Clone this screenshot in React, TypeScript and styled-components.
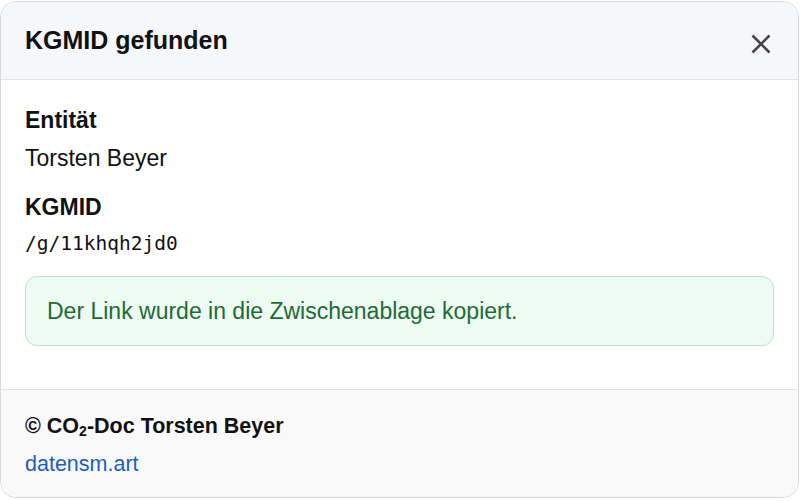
import React from "react";
import styled, { createGlobalStyle } from "styled-components";

const Global = createGlobalStyle`
  html, body { margin: 0; padding: 0; background: #ffffff; }
  body { font-family: "Liberation Sans", Arial, sans-serif; color: #111; }
  * { box-sizing: border-box; }
`;

const Page = styled.div`
  padding: 1px 1px 3px 0;
  height: 501px;
`;

const Dialog = styled.div`
  height: 497px;
  border: 1px solid #d6d9de;
  border-radius: 16px;
  overflow: hidden;
  display: flex;
  flex-direction: column;
  background: #fff;
`;

const Header = styled.div`
  height: 78px;
  flex: none;
  background: #f6f7f9;
  border-bottom: 1px solid #dfe2e6;
  display: flex;
  align-items: center;
  justify-content: space-between;
  padding: 0 25px 0 24px;
`;

const Title = styled.h2`
  margin: 0;
  font-size: 25px;
  font-weight: 700;
  color: #111;
`;

const CloseButton = styled.button`
  border: none;
  background: transparent;
  padding: 0;
  width: 24px;
  height: 24px;
  display: flex;
  align-items: center;
  justify-content: center;
  cursor: pointer;
  margin-top: 6px;
`;

const Body = styled.div`
  flex: 1;
  padding: 26px 24px 0 24px;
  display: flex;
  flex-direction: column;
`;

const Label = styled.div`
  font-size: 23px;
  font-weight: 700;
  color: #111;
  line-height: 28px;
`;

const Value = styled.div<{ $mono?: boolean }>`
  font-size: ${(p) => (p.$mono ? "19.5px" : "23px")};
  font-family: ${(p) => (p.$mono ? '"DejaVu Sans Mono", "Liberation Mono", monospace' : "inherit")};
  color: #111;
  line-height: ${(p) => (p.$mono ? "24px" : "28px")};
  margin-top: ${(p) => (p.$mono ? "11px" : "10px")};
  margin-bottom: ${(p) => (p.$mono ? "20px" : "21px")};
`;

const Alert = styled.div`
  height: 70px;
  border: 1px solid #b9e4c9;
  background: #edfbf2;
  border-radius: 12px;
  display: flex;
  align-items: center;
  padding: 0 21px;
  color: #1e6b36;
  font-size: 23px;
`;

const Footer = styled.div`
  flex: none;
  height: 108px;
  background: #f9f9fa;
  border-top: 1px solid #e2e4e7;
  padding: 23px 24px 0 24px;
  display: flex;
  flex-direction: column;
  gap: 12px;
`;

const Copyright = styled.div`
  font-size: 21.5px;
  font-weight: 700;
  line-height: 26px;
  color: #111;
`;

const Sub = styled.span`
  font-size: 14px;
  line-height: 0;
  vertical-align: -3px;
`;

const Link = styled.a`
  font-size: 21.5px;
  line-height: 26px;
  color: #1a5fc4;
  text-decoration: none;
  align-self: flex-start;
`;

export default function App() {
  return (
    <>
      <Global />
      <Page>
        <Dialog>
          <Header>
            <Title>KGMID gefunden</Title>
            <CloseButton aria-label="Schließen">
              <svg width="20" height="20" viewBox="0 0 20 20">
                <path d="M1.5 1.5 L18.5 18.5 M18.5 1.5 L1.5 18.5" stroke="#444" strokeWidth="2.5" />
              </svg>
            </CloseButton>
          </Header>
          <Body>
            <Label>Entität</Label>
            <Value>Torsten Beyer</Value>
            <Label>KGMID</Label>
            <Value $mono>/g/11khqh2jd0</Value>
            <Alert>Der Link wurde in die Zwischenablage kopiert.</Alert>
          </Body>
          <Footer>
            <Copyright>
              © CO<Sub>2</Sub>-Doc Torsten Beyer
            </Copyright>
            <Link href="#">datensm.art</Link>
          </Footer>
        </Dialog>
      </Page>
    </>
  );
}
